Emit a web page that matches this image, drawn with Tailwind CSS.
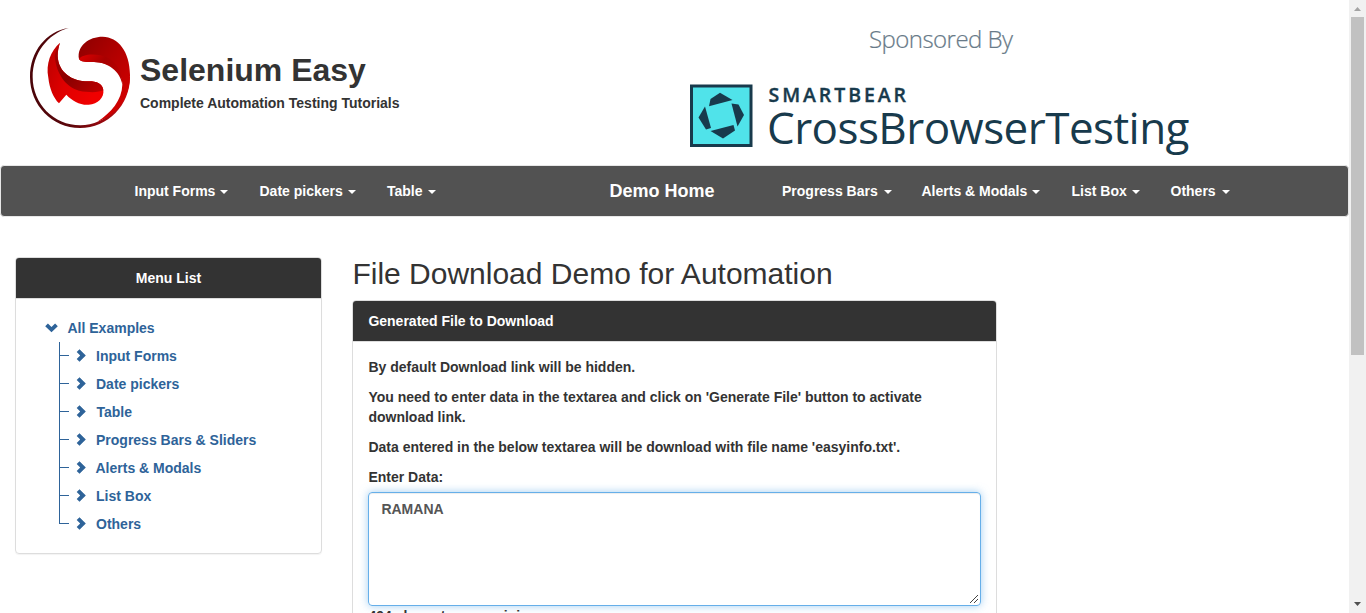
<!DOCTYPE html>
<html lang="en">
<head>
<meta charset="utf-8">
<title>Selenium Easy - File Download Demo</title>
<script src="https://cdn.jsdelivr.net/npm/@tailwindcss/browser@4"></script>
</head>
<body class="flex h-[613px] overflow-hidden bg-white font-['Liberation_Sans',Arial,sans-serif] text-sm leading-5 font-bold text-[#333]">
<div class="h-[613px] w-[1349px] shrink-0 overflow-hidden">
  <header class="flex h-[165px]">
    <div class="flex w-[680px] pt-5 pl-5">
      <svg class="h-[115px] w-[120px] shrink-0" viewBox="0 0 360 345">
        <defs>
          <linearGradient id="ring" x1="0" y1="0" x2="1" y2="0"><stop offset="0" stop-color="#4a0509"/><stop offset=".4" stop-color="#5c060b"/><stop offset="1" stop-color="#c90a10"/></linearGradient>
          <linearGradient id="right" x1="0" y1="0" x2=".8" y2="1"><stop offset="0" stop-color="#8c0000"/><stop offset=".45" stop-color="#b00000"/><stop offset="1" stop-color="#d80000"/></linearGradient>
          <linearGradient id="fold" x1="0" y1="0" x2="1" y2=".6"><stop offset="0" stop-color="#e00000"/><stop offset=".5" stop-color="#a80000"/><stop offset="1" stop-color="#b80000"/></linearGradient>
          <linearGradient id="left" x1="0" y1="0" x2="1" y2=".4"><stop offset="0" stop-color="#b80000"/><stop offset=".5" stop-color="#e00000"/><stop offset="1" stop-color="#f00000"/></linearGradient>
          <linearGradient id="dark" x1="0" y1="0" x2="1" y2="1"><stop offset="0" stop-color="#b00000"/><stop offset=".5" stop-color="#8a0000"/><stop offset="1" stop-color="#c00000"/></linearGradient>
        </defs>
        <path fill="url(#ring)" d="M146 24C78 34 30 95 30 171C30 255 96 324 180 324C264 324 330 255 330 171L323 169C322 249 260 316 181 316C101 316 38 251 38 171C38 101 82 42 146 24Z"/>
        <path fill="url(#right)" d="M177 117C170 77 207 50 248 50C295 51 329 94 330 164C330 229 295 284 232 305C273 278 306 240 307 194C308 152 268 127 222 126C202 126 184 127 177 117Z"/>
        <path fill="url(#fold)" d="M177 117C186 104 213 100 242 106C280 115 308 146 307 194C301 154 264 127 222 126C202 126 184 127 177 117Z"/>
        <path fill="url(#left)" d="M120 68C92 92 77 131 85 173C89 207 100 233 117 250L139 224C157 243 181 256 206 254C234 252 253 233 250 210C248 191 230 184 207 184C157 185 115 158 113 108C113 92 116 80 120 68Z"/>
        <path fill="url(#dark)" d="M120 68C116 80 113 92 113 108C115 158 157 185 207 184C230 184 248 191 250 211C235 218 207 218 177 212C136 201 108 158 104 108C106 92 114 80 120 68Z"/>
      </svg>
      <div class="pt-[30px]">
        <h1 class="h-10 text-[32px] leading-10 whitespace-nowrap">Selenium Easy</h1>
        <p class="pt-[3px] whitespace-nowrap">Complete Automation Testing Tutorials</p>
      </div>
    </div>
    <svg class="h-[165px] w-[520px] font-['Open_Sans',sans-serif]" viewBox="0 0 520 165">
      <text x="189" y="48" font-size="24" font-weight="300" fill="#687a88" stroke="#687a88" stroke-width=".2" textLength="144" lengthAdjust="spacing">Sponsored By</text>
      <rect x="11.5" y="86" width="59.5" height="59.5" fill="#50e3ea" stroke="#183a4c" stroke-width="3"/>
      <g fill="#183a4c">
        <path d="M40 92.7L52.5 100L29 106.2L30.5 99Z"/>
        <path d="M51.5 103.5L58.5 104.5L64 115L57.5 126.5Z"/>
        <path d="M30.5 131L53.5 125L55 130.5L43 138.5Z"/>
        <path d="M25 106.5L31 128L26 129.5L18.5 117.5Z"/>
      </g>
      <text x="88.5" y="102" font-size="19.5" font-weight="600" fill="#183a4c" stroke="#183a4c" stroke-width=".35" textLength="137.5" lengthAdjust="spacing">SMARTBEAR</text>
      <text x="87" y="144" font-size="44" font-weight="400" fill="#183a4c" textLength="422.5" lengthAdjust="spacing">CrossBrowserTesting</text>
    </svg>
  </header>

  <nav class="h-[52px] rounded border border-[#e7e7e7] bg-[#525252] text-white">
    <div class="flex h-[50px] items-center pl-[133.5px] whitespace-nowrap">
      <div class="flex w-[125px] items-center gap-[5px]">Input Forms <i class="mt-px border-x-4 border-t-4 border-x-transparent border-t-white"></i></div>
      <div class="flex w-[127.5px] items-center gap-[5px]">Date pickers <i class="mt-px border-x-4 border-t-4 border-x-transparent border-t-white"></i></div>
      <div class="flex w-[222.5px] items-center gap-[5px]">Table <i class="mt-px border-x-4 border-t-4 border-x-transparent border-t-white"></i></div>
      <div class="w-[172.5px] text-lg leading-5">Demo Home</div>
      <div class="flex w-[139.5px] items-center gap-1.5">Progress Bars <i class="mt-px border-x-4 border-t-4 border-x-transparent border-t-white"></i></div>
      <div class="flex w-[150px] items-center gap-[5px]">Alerts &amp; Modals <i class="mt-px border-x-4 border-t-4 border-x-transparent border-t-white"></i></div>
      <div class="flex w-[99px] items-center gap-[5px]">List Box <i class="mt-px border-x-4 border-t-4 border-x-transparent border-t-white"></i></div>
      <div class="flex items-center gap-1.5">Others <i class="mt-px border-x-4 border-t-4 border-x-transparent border-t-white"></i></div>
    </div>
  </nav>

  <main class="flex items-start gap-[30px] pt-10 pl-[15px]">
    <aside class="h-[297px] w-[307px] shrink-0 overflow-hidden rounded border border-[#ddd] shadow-[0_1px_1px_rgba(0,0,0,0.05)]">
      <h2 class="h-[41px] border-b border-[#ddd] bg-[#333] pt-2.5 text-center text-white">Menu List</h2>
      <div class="pt-[19px] pl-[29px] text-[#2e6399]">
        <div class="flex h-5 items-center gap-[8.5px]">
          <svg class="h-3.5 w-3.5" viewBox="0 0 14 14"><path d="M2.9 2.4L6.5 6L10.1 2.4L12.8 5.2L6.5 11.2L.2 5.2Z" fill="currentColor"/></svg>
          All Examples
        </div>
        <ul class="pt-1 pl-3.5">
          <li class="flex h-7"><span class="h-7 w-px bg-[#2e6399]"></span><span class="mt-[13px] h-px w-[9px] bg-[#2e6399]"></span><svg class="mt-1.5 ml-1.5 h-3.5 w-3.5" viewBox="0 0 14 14"><path d="M4.5 1.2L10.8 7.5L4.5 13.8L1.7 11.1L5.2 7.5L1.7 3.9Z" fill="currentColor"/></svg><span class="mt-1 ml-[7px]">Input Forms</span></li>
          <li class="flex h-7"><span class="h-7 w-px bg-[#2e6399]"></span><span class="mt-[13px] h-px w-[9px] bg-[#2e6399]"></span><svg class="mt-1.5 ml-1.5 h-3.5 w-3.5" viewBox="0 0 14 14"><path d="M4.5 1.2L10.8 7.5L4.5 13.8L1.7 11.1L5.2 7.5L1.7 3.9Z" fill="currentColor"/></svg><span class="mt-1 ml-[7px]">Date pickers</span></li>
          <li class="flex h-7"><span class="h-7 w-px bg-[#2e6399]"></span><span class="mt-[13px] h-px w-[9px] bg-[#2e6399]"></span><svg class="mt-1.5 ml-1.5 h-3.5 w-3.5" viewBox="0 0 14 14"><path d="M4.5 1.2L10.8 7.5L4.5 13.8L1.7 11.1L5.2 7.5L1.7 3.9Z" fill="currentColor"/></svg><span class="mt-1 ml-[7.5px]">Table</span></li>
          <li class="flex h-7"><span class="h-7 w-px bg-[#2e6399]"></span><span class="mt-[13px] h-px w-[9px] bg-[#2e6399]"></span><svg class="mt-1.5 ml-1.5 h-3.5 w-3.5" viewBox="0 0 14 14"><path d="M4.5 1.2L10.8 7.5L4.5 13.8L1.7 11.1L5.2 7.5L1.7 3.9Z" fill="currentColor"/></svg><span class="mt-1 ml-[7px]">Progress Bars &amp; Sliders</span></li>
          <li class="flex h-7"><span class="h-7 w-px bg-[#2e6399]"></span><span class="mt-[13px] h-px w-[9px] bg-[#2e6399]"></span><svg class="mt-1.5 ml-1.5 h-3.5 w-3.5" viewBox="0 0 14 14"><path d="M4.5 1.2L10.8 7.5L4.5 13.8L1.7 11.1L5.2 7.5L1.7 3.9Z" fill="currentColor"/></svg><span class="mt-1 ml-[6.5px]">Alerts &amp; Modals</span></li>
          <li class="flex h-7"><span class="h-7 w-px bg-[#2e6399]"></span><span class="mt-[13px] h-px w-[9px] bg-[#2e6399]"></span><svg class="mt-1.5 ml-1.5 h-3.5 w-3.5" viewBox="0 0 14 14"><path d="M4.5 1.2L10.8 7.5L4.5 13.8L1.7 11.1L5.2 7.5L1.7 3.9Z" fill="currentColor"/></svg><span class="mt-1 ml-[7px]">List Box</span></li>
          <li class="flex h-7"><span class="h-3.5 w-px bg-[#2e6399]"></span><span class="mt-[13px] h-px w-[9px] bg-[#2e6399]"></span><svg class="mt-1.5 ml-1.5 h-3.5 w-3.5" viewBox="0 0 14 14"><path d="M4.5 1.2L10.8 7.5L4.5 13.8L1.7 11.1L5.2 7.5L1.7 3.9Z" fill="currentColor"/></svg><span class="mt-1 ml-[7px]">Others</span></li>
        </ul>
      </div>
    </aside>

    <section class="w-[645px]">
      <h2 class="h-[43px] pl-[.4px] text-[30px] leading-[33px] font-normal whitespace-nowrap">File Download Demo for Automation</h2>
      <div class="h-[420px] overflow-hidden rounded border border-[#ddd]">
        <h3 class="h-[41px] border-b border-[#ddd] bg-[#333] px-[15.4px] pt-2.5 text-white">Generated File to Download</h3>
        <div class="px-[15px] pt-[15px]">
          <p class="mb-2.5 pl-[.4px]">By default Download link will be hidden.</p>
          <p class="mb-2.5 pl-[.4px]">You need to enter data in the textarea and click on 'Generate File' button to activate<br>download link.</p>
          <p class="mb-2.5 pl-[.4px]">Data entered in the below textarea will be download with file name 'easyinfo.txt'.</p>
          <label class="mb-[5px] block pl-[.4px]">Enter Data:</label>
          <div class="flex h-[114px] w-[613px] justify-between rounded border border-[#66afe9] pt-1.5 pl-[12.4px] text-[#555] shadow-[inset_0_1px_1px_rgba(0,0,0,0.075),0_0_8px_rgba(102,175,233,0.6)]">
            <span>RAMANA</span>
            <svg class="mr-px mb-px h-2.5 w-2.5 self-end" viewBox="0 0 10 10"><path d="M1 9L9 1M5 9L9 5" stroke="#444" stroke-width="1"/></svg>
          </div>
          <p class="pl-[.4px]">494 characters remaining</p>
        </div>
      </div>
    </section>
  </main>
</div>

<div class="flex h-[613px] w-[17px] shrink-0 flex-col items-center bg-[#f1f1f1]">
  <svg class="h-[17px] w-[17px]" viewBox="0 0 17 17"><path d="M5 11L8.5 7L12 11Z" fill="#a3a3a3"/></svg>
  <div class="h-[338px] w-[13px] bg-[#c1c1c1]"></div>
  <svg class="mt-auto h-[17px] w-[17px]" viewBox="0 0 17 17"><path d="M5 6L12 6L8.5 10Z" fill="#505050"/></svg>
</div>
</body>
</html>
